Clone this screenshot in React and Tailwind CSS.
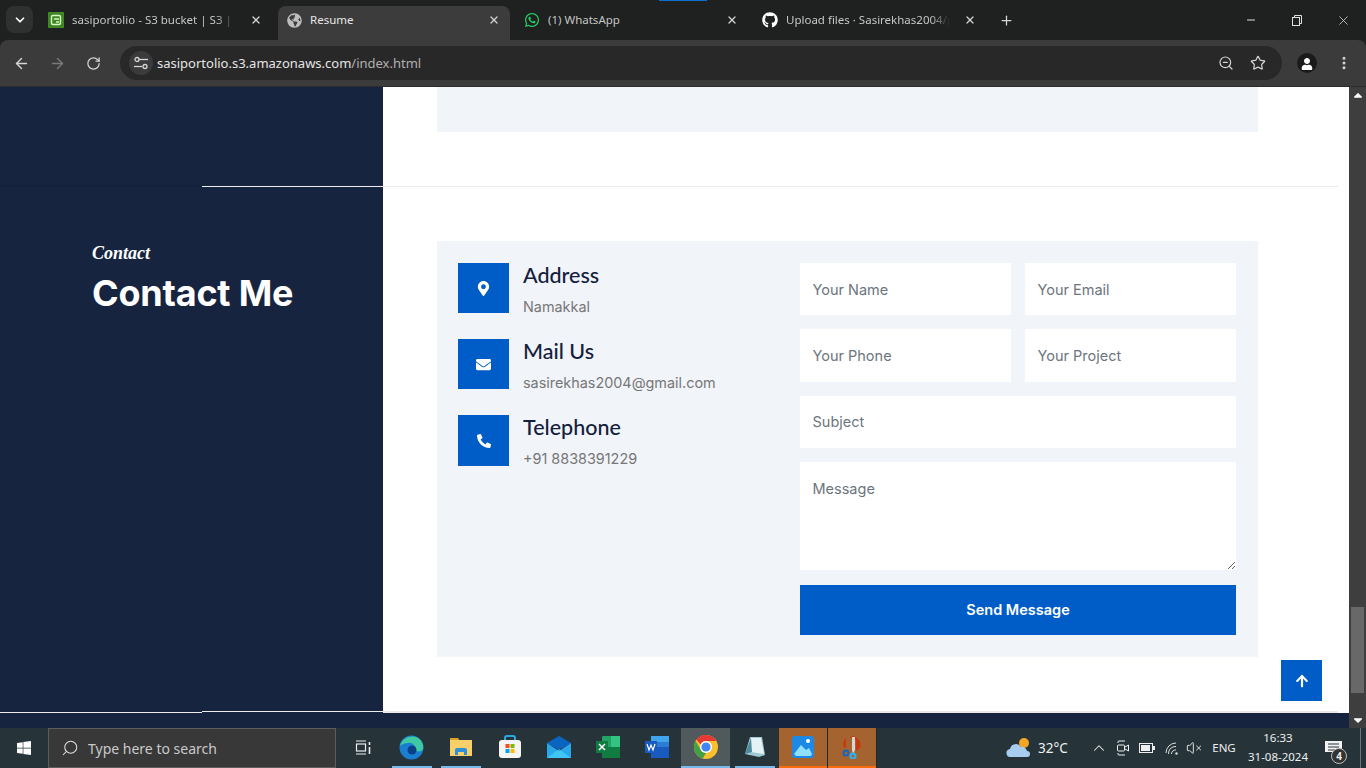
import { ChevronDown, X, ArrowLeft, ArrowRight, RotateCw, ZoomOut, Star, MoreVertical, Plus, Minus, Search, ChevronUp, VolumeX } from 'lucide-react';
import { FaMapMarkerAlt, FaEnvelope, FaPhoneAlt, FaArrowUp, FaGithub, FaWhatsapp, FaGlobeAmericas, FaWindows, FaUser, FaCaretUp, FaCaretDown } from 'react-icons/fa';

function S3Icon() {
  return (
    <svg width="16" height="16" viewBox="0 0 16 16">
      <rect width="16" height="16" fill="#3f8624" />
      <rect x="3.5" y="3.5" width="9" height="9" rx="1.5" fill="none" stroke="#d8f5c8" strokeWidth="1.4" />
      <path d="M6 7h5M8 10h3" stroke="#d8f5c8" strokeWidth="1.4" />
    </svg>
  );
}

function Tab({ icon, title, active, dim }) {
  return (
    <div className="w-[238px] pr-[6px] shrink-0">
      <div className={`w-[232px] h-[34px] pl-2 pr-[10px] pb-[6px] flex items-center gap-2 rounded-t-lg ${active ? 'bg-[#3c3c3c] text-[#e6e6e6]' : 'text-[#c4c7c5]'}`}>
        <span className="w-4 h-4 shrink-0 flex items-center justify-center">{icon}</span>
        <span className={`flex-1 text-[11.5px] leading-[18px] whitespace-nowrap overflow-hidden ${dim ? '[mask-image:linear-gradient(to_right,black_88%,transparent_100%)]' : ''}`}>{title}</span>
        <X size={12} strokeWidth={2.5} className="shrink-0 ml-[6px] text-[#d5d5d5]" />
      </div>
    </div>
  );
}

function ChromeBar() {
  return (
    <div className="shrink-0 bg-[#1f2020] font-['Noto_Sans',sans-serif]">
      <div className="h-[40px] flex items-end relative">
        <div className="absolute top-0 left-[659px] w-[48px] h-px bg-[#0a6fd1]" />
        <div className="w-[40px] h-[34px] pl-[6px]">
          <div className="w-[27px] h-[27px] rounded-lg bg-[#2f3030] flex items-center justify-center text-white">
            <ChevronDown size={14} strokeWidth={3} />
          </div>
        </div>
        <Tab icon={<S3Icon />} title="sasiportolio - S3 bucket | S3 | us-east-1" dim />
        <Tab icon={<FaGlobeAmericas size={15} className="text-[#bdbdbd]" />} title="Resume" active />
        <Tab icon={<FaWhatsapp size={16} className="text-[#25d366]" />} title="(1) WhatsApp" />
        <Tab icon={<FaGithub size={16} className="text-white" />} title="Upload files · Sasirekhas2004/portfolio" dim />
        <div className="h-[34px] w-[16px] ml-[6px] pb-[6px] flex items-center justify-center text-[#d5d5d5]"><Plus size={15} strokeWidth={2} /></div>
        <div className="flex-1" />
        <div className="h-[40px] flex items-center text-[#e0e0e0]">
          <div className="w-[46px] flex justify-center"><Minus size={12} /></div>
          <div className="w-[46px] flex justify-center">
            <svg width="10" height="11" viewBox="0 0 10 11" fill="none" stroke="currentColor"><rect x="0.5" y="2.5" width="7" height="8" /><path d="M2.5 2.5v-2h7v8h-2" /></svg>
          </div>
          <div className="w-[46px] flex justify-center"><X size={15} strokeWidth={1.2} /></div>
        </div>
      </div>
      <div className="h-[47px] bg-[#3b3b3b] rounded-t-lg flex items-center pl-[13px] pr-[13px] border-b border-[#2c2c2c] text-[#d6d6d6]">
        <div className="w-[36px] flex justify-start"><ArrowLeft size={17} strokeWidth={2} /></div>
        <div className="w-[36px] flex justify-start text-[#7a7a7a]"><ArrowRight size={17} strokeWidth={2} /></div>
        <div className="w-[35px] flex justify-start pl-px"><RotateCw size={15} strokeWidth={2} /></div>
        <div className="w-[1162px] h-[34px] rounded-full bg-[#282828] flex items-center">
          <div className="w-[37px] pl-[5px] flex justify-center">
            <div className="w-[24px] h-[24px] rounded-full bg-[#3b3b3b] flex items-center justify-center">
              <svg width="14" height="14" viewBox="0 0 14 14" fill="none" stroke="#d6d6d6" strokeWidth="1.3">
                <path d="M5 3.5h9" /><circle cx="3" cy="3.5" r="2" /><path d="M0 10.5h8" /><circle cx="11" cy="10.5" r="2" />
              </svg>
            </div>
          </div>
          <span className="pt-px text-[13px] text-[#e4e4e4]">sasiportolio.s3.amazonaws.com<span className="text-[#b0b0b0]">/index.html</span></span>
          <div className="flex-1" />
          <ZoomOut size={16} strokeWidth={1.8} className="mr-[16px]" />
          <Star size={16} strokeWidth={1.8} className="mr-[16px]" />
        </div>
        <div className="ml-[15px] w-[20px] h-[20px] rounded-full bg-[#1b1b1b] flex items-end justify-center overflow-hidden">
          <FaUser size={12} className="text-white mb-[3px]" />
        </div>
        <MoreVertical size={16} strokeWidth={2.5} className="ml-[19px]" />
      </div>
    </div>
  );
}

function InfoRow({ icon, title, text, tall }) {
  return (
    <div className={`flex gap-[14px] ${tall ? 'h-[51px]' : 'h-[50px]'}`}>
      <div className="w-[51px] shrink-0 bg-[#005dc8] text-white flex items-center justify-center">{icon}</div>
      <div>
        <h5 className="text-[21.5px] leading-[25px] font-medium text-[#14203c] font-['Lato',sans-serif]">{title}</h5>
        <p className="mt-[8px] text-[14.4px] leading-[22px] text-[#777] font-['Inter',sans-serif]">{text}</p>
      </div>
    </div>
  );
}

const inputClass = "w-full bg-white px-[12.5px] text-[14.5px] text-[#333] placeholder-[#6c757d] outline-none font-['Inter',sans-serif]";

function ContactCard() {
  return (
    <div className="h-[416px] bg-[#f1f4f9] p-[22px] pl-[21px] flex">
      <div className="w-[342px] flex flex-col gap-[26px]">
        <InfoRow icon={<FaMapMarkerAlt size={15} />} title="Address" text="Namakkal" />
        <InfoRow icon={<FaEnvelope size={15} />} title="Mail Us" text="sasirekhas2004@gmail.com" />
        <InfoRow icon={<FaPhoneAlt size={14} />} title="Telephone" text="+91 8838391229" tall />
      </div>
      <form className="w-[436px] flex flex-col gap-[14px]">
        <div className="grid grid-cols-2 gap-[14px]">
          <input className={`${inputClass} h-[52px]`} placeholder="Your Name" />
          <input className={`${inputClass} h-[52px]`} placeholder="Your Email" />
          <input className={`${inputClass} h-[53px]`} placeholder="Your Phone" />
          <input className={`${inputClass} h-[53px]`} placeholder="Your Project" />
        </div>
        <input className={`${inputClass} h-[52px]`} placeholder="Subject" />
        <textarea className={`${inputClass} h-[109px] py-[16px] block`} placeholder="Message" />
        <button type="button" className="h-[50px] mt-px bg-[#005dc8] text-white text-[14.5px] font-semibold font-['Inter',sans-serif]">Send Message</button>
      </form>
    </div>
  );
}

function Page() {
  return (
    <div className="flex-1 relative flex flex-col min-w-0">
      <div className="h-[99px] flex">
        <aside className="w-[383px] shrink-0 bg-[#16243f]" />
        <div className="flex-1 bg-white pl-[54px] pr-[91px]">
          <div className="h-[45px] bg-[#f1f4f9]" />
        </div>
      </div>
      <div className="h-px flex">
        <div className="w-[202px] bg-[#121f38]" />
        <div className="w-[181px] bg-[#eeeeee]" />
        <div className="w-[955px] bg-[#ececec]" />
        <div className="flex-1 bg-white" />
      </div>
      <div className="h-[524px] flex">
        <aside className="w-[383px] shrink-0 bg-[#16243f] pl-[92px] pt-[54px] text-white">
          <p className="text-[18px] leading-[24px] italic font-bold font-['Liberation_Serif',serif]">Contact</p>
          <h2 className="mt-[6px] text-[36px] leading-[44px] font-bold font-['Inter',sans-serif] tracking-[-0.2px]">Contact Me</h2>
        </aside>
        <div className="flex-1 bg-white pl-[54px] pr-[91px] pt-[54px]">
          <ContactCard />
        </div>
      </div>
      <div className="h-px flex">
        <div className="w-[202px] bg-[#16243f]" />
        <div className="w-[181px] bg-[#eeeeee]" />
        <div className="w-[955px] bg-[#e8e8e8]" />
        <div className="flex-1 bg-white" />
      </div>
      <div className="h-px flex">
        <div className="w-[202px] bg-[#eeeeee]" />
        <div className="w-[181px] bg-[#16243f]" />
        <div className="w-[955px] bg-[#e8e8e8]" />
        <div className="flex-1 bg-white" />
      </div>
      <div className="flex-1 bg-[#16243f]" />
      <a className="absolute left-[1281px] top-[573px] w-[41px] h-[41px] bg-[#005dc8] text-white flex items-center justify-center">
        <FaArrowUp size={14} />
      </a>
    </div>
  );
}

function Scrollbar() {
  return (
    <div className="w-[17px] shrink-0 bg-[#3e3e3e] flex flex-col items-center text-white">
      <div className="h-[16px] flex items-center justify-center"><FaCaretUp size={14} /></div>
      <div className="flex-1" />
      <div className="w-[13px] h-[86px] bg-[#686868]" />
      <div className="h-[19px]" />
      <div className="h-[16px] flex items-center justify-center"><FaCaretDown size={14} /></div>
    </div>
  );
}

function AppButton({ children, bar, active, tint }) {
  return (
    <div className={`w-[49px] h-full flex flex-col items-center ${active ? 'bg-[#50595c]' : ''} ${tint ? 'bg-[#a5642f] border-r border-[#1f2a2e]' : ''}`}>
      <div className="flex-1 flex items-center justify-center">{children}</div>
      <div className={`h-[2px] ${bar || 'w-0'}`} />
    </div>
  );
}

function Edge() {
  return (
    <svg width="25" height="25" viewBox="0 0 25 25">
      <circle cx="12.5" cy="12.5" r="12" fill="#1b7fd1" />
      <path d="M1 11C3 3 11 0 17 2c5 2 8 7 7 12-1 3-6 3-8 1 1-5-3-8-7-7-4 0-7 2-8 3z" fill="#3ec9a0" />
      <circle cx="13" cy="15" r="4.5" fill="#0c3f86" />
    </svg>
  );
}

function Explorer() {
  return (
    <svg width="22" height="20" viewBox="0 0 22 20">
      <path d="M0 1h8l2 3h-10z" fill="#d9a326" />
      <rect y="3" width="22" height="16" fill="#f8d06a" />
      <path d="M5 18v-5a2 2 0 0 1 2-2h8a2 2 0 0 1 2 2v5h-3v-3H8v3z" fill="#2f8fd8" />
    </svg>
  );
}

function Store() {
  return (
    <svg width="24" height="24" viewBox="0 0 24 24">
      <path d="M7 6V3a2 2 0 0 1 2-2h6a2 2 0 0 1 2 2v3" fill="none" stroke="#2aa8e6" strokeWidth="2" />
      <rect x="1" y="5" width="22" height="18" rx="3" fill="#f5f5f5" />
      <rect x="7.5" y="9" width="4" height="4" fill="#f25022" />
      <rect x="12.5" y="9" width="4" height="4" fill="#7fba00" />
      <rect x="7.5" y="14" width="4" height="4" fill="#00a4ef" />
      <rect x="12.5" y="14" width="4" height="4" fill="#ffb900" />
    </svg>
  );
}

function Mail() {
  return (
    <svg width="24" height="22" viewBox="0 0 24 22">
      <path d="M12 0l12 7-12 7L0 7z" fill="#0b64c0" />
      <path d="M0 7l12 8 12-8v15H0z" fill="#28a8ea" />
      <path d="M0 22l12-9 12 9z" fill="#50d9ff" opacity="0.6" />
    </svg>
  );
}

function Excel() {
  return (
    <svg width="24" height="22" viewBox="0 0 24 22">
      <rect x="6" width="18" height="22" rx="1" fill="#21a366" />
      <rect x="6" y="11" width="18" height="11" fill="#107c41" />
      <rect x="15" width="9" height="11" fill="#33c481" />
      <rect y="5" width="12" height="12" fill="#107c41" />
      <path d="M3 8l6 6M9 8l-6 6" stroke="#fff" strokeWidth="1.5" />
    </svg>
  );
}

function Word() {
  return (
    <svg width="24" height="22" viewBox="0 0 24 22">
      <rect x="6" width="18" height="22" rx="1" fill="#2b7cd3" />
      <rect x="6" y="11" width="18" height="11" fill="#185abd" />
      <rect x="6" y="0" width="18" height="6" fill="#41a5ee" />
      <rect y="5" width="12" height="12" fill="#185abd" />
      <path d="M2 8l2 6 2-5 2 5 2-6" fill="none" stroke="#fff" strokeWidth="1.2" />
    </svg>
  );
}

function ChromeLogo() {
  return (
    <svg width="24" height="24" viewBox="0 0 24 24">
      <circle cx="12" cy="12" r="12" fill="#fbc02d" />
      <path d="M12 0a12 12 0 0 1 10.4 6H12a6 6 0 0 0-5.4 3.4L2.3 4.4A12 12 0 0 1 12 0z" fill="#e53935" />
      <path d="M1.6 6L7 15a6 6 0 0 0 5 3l-3.3 5.6A12 12 0 0 1 1.6 6z" fill="#43a047" />
      <circle cx="12" cy="12" r="6" fill="#fff" />
      <circle cx="12" cy="12" r="4.6" fill="#4285f4" />
    </svg>
  );
}

function Notepad() {
  return (
    <svg width="22" height="22" viewBox="0 0 22 22">
      <path d="M6 1h12l3 18-6 2-14-3z" fill="#9ec9d4" />
      <path d="M7 2h10l3 16-13-2z" fill="#e4f2f4" />
      <path d="M1 18l6-16 1 14z" fill="#4d8b9c" />
    </svg>
  );
}

function Photos() {
  return (
    <svg width="22" height="22" viewBox="0 0 22 22">
      <rect width="22" height="22" rx="3" fill="#1e88e5" />
      <path d="M2 18l7-9 5 5 3-2 3 6a2 2 0 0 1-2 2H4z" fill="#8fe0fb" />
      <circle cx="16" cy="5" r="2" fill="#fff" />
    </svg>
  );
}

function Snip() {
  return (
    <svg width="22" height="24" viewBox="0 0 22 24">
      <path d="M11 1a9 9 0 0 1 8 12l-4 3V5L9 3z" fill="#c8380f" />
      <path d="M5 3a9 9 0 0 0-2 10l2-1z" fill="#c8380f" />
      <path d="M11 2h3v13l-2 4-1-4z" fill="#d6d6d6" />
      <circle cx="5" cy="18" r="2.5" fill="none" stroke="#1565c0" strokeWidth="2" />
      <circle cx="12" cy="21" r="2.5" fill="none" stroke="#29b6f6" strokeWidth="2" />
    </svg>
  );
}

function TaskView() {
  return (
    <svg width="16" height="15" viewBox="0 0 16 15" fill="none" stroke="#ececec" strokeWidth="1.2">
      <path d="M1 1h10M1 14h10" /><rect x="1.5" y="4" width="9" height="7" /><path d="M14.5 2v3M14.5 7v7" strokeWidth="1.6" />
    </svg>
  );
}

function Weather() {
  return (
    <svg width="26" height="22" viewBox="0 0 26 22">
      <circle cx="18" cy="6" r="5" fill="#f5a623" />
      <path d="M5 20a4 4 0 0 1-1-8 6 6 0 0 1 11-2 5 5 0 0 1 6 4 3 3 0 0 1 0 6z" fill="#a9cdee" />
    </svg>
  );
}

function MeetIcon() {
  return (
    <svg width="12" height="16" viewBox="0 0 12 16" fill="none" stroke="#eee" strokeWidth="1">
      <path d="M1 3V2a1 1 0 0 1 1-1h6M1 13v1a1 1 0 0 0 1 1h6" />
      <rect x="0.5" y="5" width="7" height="6" rx="1" />
      <path d="M8 7l3.5-2v6L8 9" />
    </svg>
  );
}

function WifiIcon() {
  return (
    <svg width="14" height="13" viewBox="0 0 14 13" fill="none" stroke="#ddd" strokeWidth="1">
      <path d="M1 11a10 10 0 0 1 10-10M3.5 12a7 7 0 0 1 7.5-7.5M6.5 12a4 4 0 0 1 4.5-4" />
      <circle cx="11.5" cy="11.5" r="1.2" fill="#ddd" stroke="none" />
    </svg>
  );
}

function Taskbar() {
  return (
    <div className="h-[40px] shrink-0 bg-[#26343a] flex items-stretch text-[#eeeeee] font-['Noto_Sans',sans-serif]">
      <div className="w-[48px] flex items-center justify-center text-white"><FaWindows size={16} /></div>
      <div className="w-[288px] bg-[#383838] border border-[#5d5d5d] flex items-center pl-[12px] gap-[9px]">
        <Search size={18} strokeWidth={1.4} className="-scale-x-100 text-[#e0e0e0]" />
        <span className="text-[14px] text-[#c9c9c9]">Type here to search</span>
      </div>
      <div className="w-[2px]" />
      <AppButton><TaskView /></AppButton>
      <AppButton bar="w-[40px] bg-[#76b9ed]"><Edge /></AppButton>
      <AppButton bar="w-[40px] bg-[#76b9ed]"><Explorer /></AppButton>
      <AppButton><Store /></AppButton>
      <AppButton><Mail /></AppButton>
      <AppButton><Excel /></AppButton>
      <AppButton><Word /></AppButton>
      <AppButton active bar="w-full bg-[#76b9ed]"><ChromeLogo /></AppButton>
      <AppButton bar="w-[40px] bg-[#76b9ed]"><Notepad /></AppButton>
      <AppButton tint bar="w-full bg-[#f76c0c]"><Photos /></AppButton>
      <AppButton tint bar="w-full bg-[#f76c0c]"><Snip /></AppButton>
      <div className="flex-1" />
      <div className="w-[27px] flex items-center"><Weather /></div>
      <div className="w-[32px] ml-[5px] flex items-center text-[13.5px] whitespace-nowrap">32°C</div>
      <div className="w-[24px] ml-[17px] flex items-center justify-center"><ChevronUp size={18} strokeWidth={1.4} /></div>
      <div className="w-[24px] flex items-center justify-center"><MeetIcon /></div>
      <div className="w-[24px] flex items-center justify-center">
        <svg width="16" height="10" viewBox="0 0 16 10"><rect x="0.5" y="0.5" width="13" height="9" fill="none" stroke="#eee" /><rect x="2" y="2" width="9" height="6" fill="#eee" /><rect x="14" y="3" width="2" height="4" fill="#eee" /></svg>
      </div>
      <div className="w-[24px] ml-px flex items-center justify-center"><WifiIcon /></div>
      <div className="w-[20px] flex items-center justify-center"><VolumeX size={16} strokeWidth={1.4} /></div>
      <div className="w-[40px] flex items-center justify-center text-[11.5px]">ENG</div>
      <div className="w-[68px] pb-[2px] flex flex-col items-center justify-center text-[11.5px] leading-[19px]">
        <span>16:33</span>
        <span>31-08-2024</span>
      </div>
      <div className="w-[42px] flex items-center justify-center relative">
        <svg width="17" height="15" viewBox="0 0 17 15"><path d="M0 0h17v11h-5l-3 4v-4H0z" fill="#f2f2f2" /><path d="M3 3h11M3 6h11M3 9h7" stroke="#26343a" /></svg>
        <span className="absolute left-[19px] top-[20px] w-[16px] h-[16px] rounded-full bg-[#333] border border-[#bbb] text-[10px] font-bold leading-none flex items-center justify-center">4</span>
      </div>
      <div className="w-[12px] pr-[5px]"><div className="h-full border-r border-[#6d7679]" /></div>
    </div>
  );
}

export default function App() {
  return (
    <div className="h-screen w-full overflow-hidden flex flex-col">
      <ChromeBar />
      <div className="flex-1 flex min-h-0">
        <Page />
        <Scrollbar />
      </div>
      <Taskbar />
    </div>
  );
}
